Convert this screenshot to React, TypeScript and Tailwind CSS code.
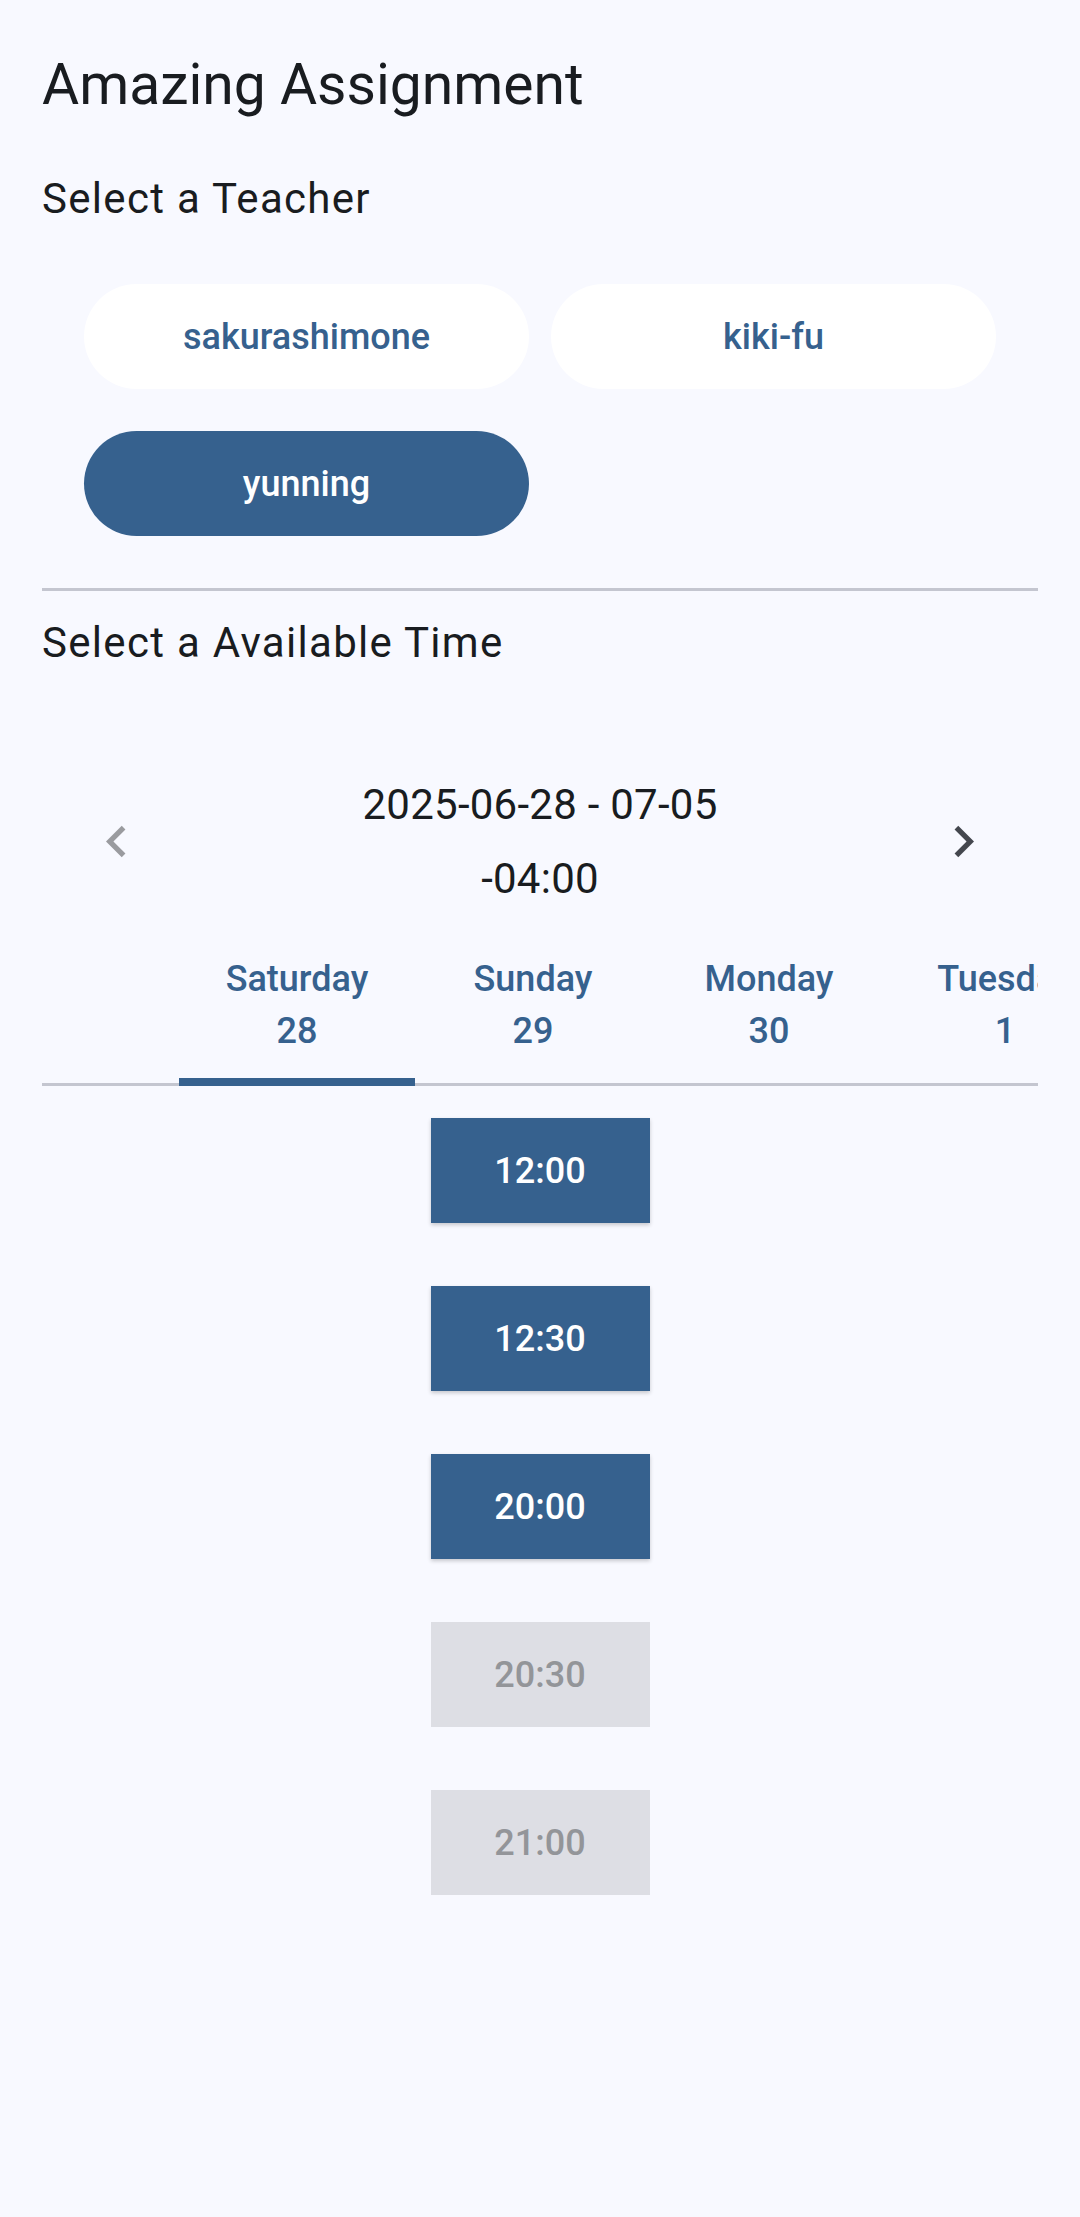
import { useState } from "react";

const TEACHERS = ["sakurashimone", "kiki-fu", "yunning"];

const DAYS = [
  { name: "Saturday", date: 28 },
  { name: "Sunday", date: 29 },
  { name: "Monday", date: 30 },
  { name: "Tuesday", date: 1 },
];

const SLOTS = [
  { time: "12:00", open: true },
  { time: "12:30", open: true },
  { time: "20:00", open: true },
  { time: "20:30", open: false },
  { time: "21:00", open: false },
];

function Chevron({ dir, className }: { dir: "left" | "right"; className: string }) {
  return (
    <svg viewBox="0 0 24 24" className={className} fill="currentColor" aria-hidden>
      {dir === "left" ? (
        <path d="M15.41 7.41L14 6l-6 6 6 6 1.41-1.41L10.83 12z" />
      ) : (
        <path d="M10 6L8.59 7.41 13.17 12l-4.58 4.59L10 18l6-6z" />
      )}
    </svg>
  );
}

export default function App() {
  const [teacher, setTeacher] = useState("yunning");
  const [day, setDay] = useState(0);

  return (
    <div className="min-h-[2217px] bg-[#f8f9ff] px-[42px] pt-[48px] font-[Roboto,sans-serif] text-[#191c20]">
      <h1 className="text-[57px] leading-[74px] font-normal">Amazing Assignment</h1>

      <p className="mt-[45px] text-[42px] leading-[63px] tracking-[1.3px]">Select a Teacher</p>

      <div className="mt-[54px] grid grid-cols-2 gap-x-[22px] gap-y-[42px] px-[42px]">
        {TEACHERS.map((t) => (
          <button
            key={t}
            type="button"
            onClick={() => setTeacher(t)}
            className={
              teacher === t
                ? "h-[105px] rounded-full bg-[#36618e] text-[36px] font-medium text-white"
                : "h-[105px] rounded-full bg-white text-[36px] font-medium text-[#36618e]"
            }
          >
            {t}
          </button>
        ))}
      </div>

      <div className="mt-[52px] h-[3px] bg-[#c4c6d0]" />

      <p className="mt-[20px] text-[42px] leading-[63px] tracking-[1.3px]">Select a Available Time</p>

      {/* week header */}
      <div className="mt-[99px] flex items-center justify-between px-[43px]">
        <Chevron dir="left" className="h-[63px] w-[63px] text-[#9a9b9f]" />
        <div className="flex flex-col items-center text-[42px] leading-[63px] tracking-[0.25px]">
          <span>2025-06-28 - 07-05</span>
          <span className="mt-[11px]">-04:00</span>
        </div>
        <Chevron dir="right" className="h-[63px] w-[63px] text-[#44474e]" />
      </div>

      <div className="relative mt-[21px] overflow-hidden">
        <div className="flex pl-[137px]">
          {DAYS.map((d, i) => (
            <button
              key={d.name}
              type="button"
              onClick={() => setDay(i)}
              className="relative flex w-[236px] shrink-0 flex-col items-center pt-[22px] pb-[29px] text-[36px] leading-[52px] font-medium whitespace-nowrap text-[#36618e]"
            >
              <span>{d.name}</span>
              <span>{d.date}</span>
              {day === i && <span className="absolute inset-x-0 bottom-0 z-10 h-[8px] bg-[#36618e]" />}
            </button>
          ))}
        </div>
        <div className="absolute inset-x-0 bottom-0 h-[3px] bg-[#c4c6d0]" />
      </div>

      {/* slots */}
      <div className="mt-[32px] flex flex-col items-center gap-[63px]">
        {SLOTS.map((s) => (
          <button
            key={s.time}
            type="button"
            disabled={!s.open}
            className={
              s.open
                ? "h-[105px] w-[219px] bg-[#36618e] text-[36px] font-medium text-white shadow-[0_2px_4px_rgba(0,0,0,0.2)]"
                : "h-[105px] w-[219px] bg-[#dddee4] text-[36px] font-medium text-[#939599]"
            }
          >
            {s.time}
          </button>
        ))}
      </div>
    </div>
  );
}
